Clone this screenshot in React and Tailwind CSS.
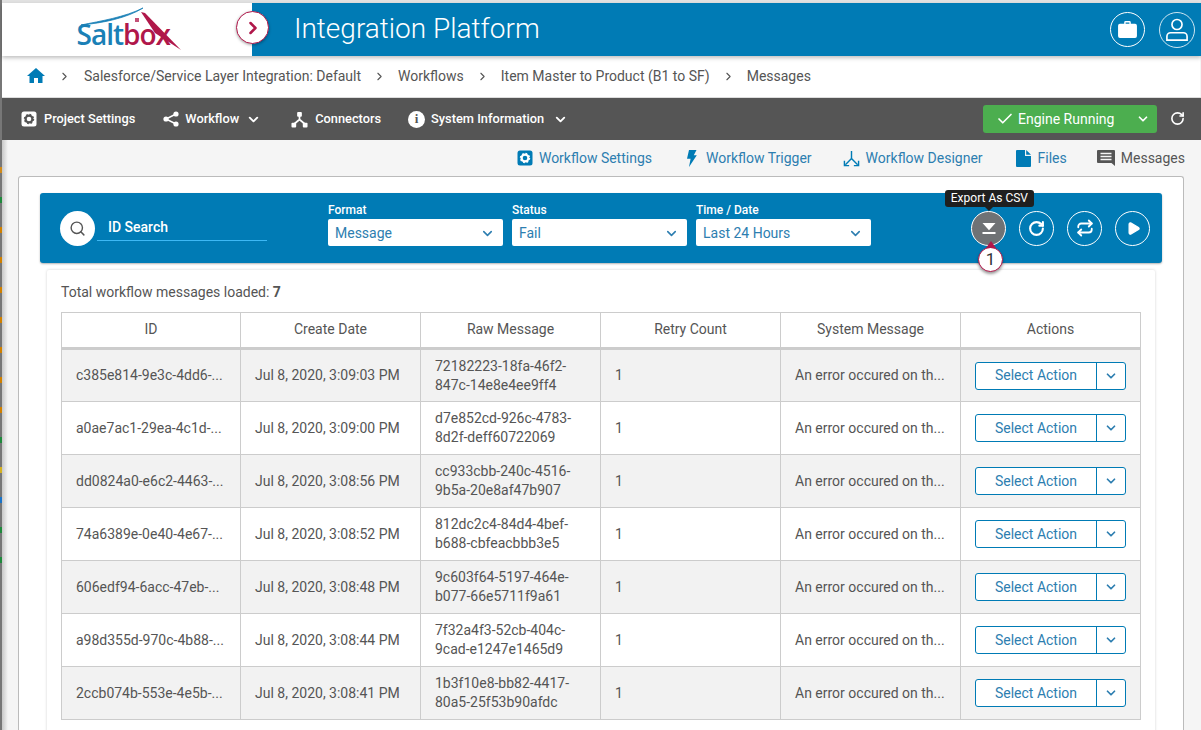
import React from "react";
import { ChevronRight, ChevronDown, RotateCw, Repeat, Search, Check, Play } from "lucide-react";

const rows = [
  ["c385e814-9e3c-4dd6-...", "Jul 8, 2020, 3:09:03 PM", "72182223-18fa-46f2-", "847c-14e8e4ee9ff4"],
  ["a0ae7ac1-29ea-4c1d-...", "Jul 8, 2020, 3:09:00 PM", "d7e852cd-926c-4783-", "8d2f-deff60722069"],
  ["dd0824a0-e6c2-4463-...", "Jul 8, 2020, 3:08:56 PM", "cc933cbb-240c-4516-", "9b5a-20e8af47b907"],
  ["74a6389e-0e40-4e67-...", "Jul 8, 2020, 3:08:52 PM", "812dc2c4-84d4-4bef-", "b688-cbfeacbbb3e5"],
  ["606edf94-6acc-47eb-...", "Jul 8, 2020, 3:08:48 PM", "9c603f64-5197-464e-", "b077-66e5711f9a61"],
  ["a98d355d-970c-4b88-...", "Jul 8, 2020, 3:08:44 PM", "7f32a4f3-52cb-404c-", "9cad-e1247e1465d9"],
  ["2ccb074b-553e-4e5b-...", "Jul 8, 2020, 3:08:41 PM", "1b3f10e8-bb82-4417-", "80a5-25f53b90afdc"],
];
const heads = ["ID", "Create Date", "Raw Message", "Retry Count", "System Message", "Actions"];
const ticks = [
  [170, "#d08a1a"], [200, "#1f8a3c"], [230, "#d08000"], [260, "#d08000"], [290, "#d08000"], [320, "#d08000"],
  [350, "#d08000"], [380, "#d08000"], [410, "#d08000"], [440, "#1f8a3c"], [470, "#d4b020"], [500, "#1a73c8"],
  [530, "#1f8a3c"], [560, "#1f8a3c"],
];

function GearBox({ className }) {
  return (
    <svg viewBox="0 0 16 16" className={className}>
      <rect x="0.5" y="0.5" width="15" height="15" rx="2.5" fill="currentColor" />
      <circle cx="8" cy="8" r="3.4" fill="none" stroke="var(--gear)" strokeWidth="2.2" />
      <circle cx="8" cy="8" r="4.4" fill="none" stroke="var(--gear)" strokeWidth="1.6" strokeDasharray="1.7 1.75" />
    </svg>
  );
}
function Tree({ className }) {
  return (
    <svg viewBox="0 0 18 18" className={className} fill="currentColor">
      <rect x="6.5" y="1" width="5" height="5" rx="1" />
      <rect x="0.5" y="12.5" width="5" height="5" rx="1" />
      <rect x="12.5" y="12.5" width="5" height="5" rx="1" />
      <path d="M9 5v4M9 9l-6 5M9 9l6 5" stroke="currentColor" strokeWidth="1.8" fill="none" />
    </svg>
  );
}
function Share({ className }) {
  return (
    <svg viewBox="0 0 16 16" className={className} fill="currentColor">
      <circle cx="13" cy="3" r="2.6" />
      <circle cx="3" cy="8" r="2.6" />
      <circle cx="13" cy="13" r="2.6" />
      <path d="M13 3 3 8l10 5" fill="none" stroke="currentColor" strokeWidth="1.5" />
    </svg>
  );
}
function Designer({ className }) {
  return (
    <svg viewBox="0 0 18 18" className={className} fill="none" stroke="currentColor" strokeWidth="1.5">
      <path d="M9 1v8M9 9l-6.5 6.5M9 9l6.5 6.5" />
      <path d="M1.5 11.5v5h5M16.5 11.5v5h-5" />
    </svg>
  );
}
function HomeIcon({ className }) {
  return (
    <svg viewBox="0 0 18 15" className={className} fill="currentColor">
      <path d="M9 0 18 8h-2.5v7h-4.5v-5H7v5H2.500V8H0Z" />
    </svg>
  );
}
function Bolt({ className }) {
  return (
    <svg viewBox="0 0 11 17" className={className} fill="currentColor">
      <path d="M3 0h7.500L7.800 5.200h3L3 17l1.600-8.300H1Z" />
    </svg>
  );
}
function FileIcon({ className }) {
  return (
    <svg viewBox="0 0 15 17" className={className} fill="currentColor">
      <path d="M1 0h8v6h6v10a1 1 0 0 1-1 1H1a1 1 0 0 1-1-1V1a1 1 0 0 1 1-1Z" />
      <path d="M10.200 0 15 4.800h-4.800Z" />
    </svg>
  );
}
function MsgIcon({ className }) {
  return (
    <svg viewBox="0 0 18 17" className={className}>
      <path d="M0 1a1 1 0 0 1 1-1h16a1 1 0 0 1 1 1v15l-3.500-3H1a1 1 0 0 1-1-1Z" fill="#555" />
      <path d="M3.500 3.500h11M3.500 6.500h11M3.500 9.500h11" stroke="#f5f5f5" strokeWidth="1.700" />
    </svg>
  );
}
function Logo() {
  return (
    <div className="relative w-[110px] h-[46px]">
      <svg viewBox="0 0 110 46" className="absolute inset-0 w-full h-full">
        <path d="M6 18 C26 14 50 10 68 1 C52 11 28 16 6 18Z" fill="#1a80b6" stroke="#1a80b6" strokeWidth="0.8" />
        <path d="M66 5 L70 6 L106 43 L80 26Z" fill="#b0174a" />
        <rect x="60" y="11" width="4" height="4" fill="#b0174a" opacity="0.75" />
      </svg>
      <span className="absolute left-[2px] top-[11px] text-[28px] leading-[32px] font-semibold font-['Open_Sans',sans-serif] tracking-[-1px] text-[#1a80b6]">
        Salt<span className="text-[#b0174a]">box</span>
      </span>
    </div>
  );
}

export default function App() {
  return (
    <div className="relative w-[1201px] h-[730px] overflow-hidden bg-[#f5f5f5] font-['Roboto',sans-serif] text-[#555]">
      {ticks.map(([y, c]) => (
        <span key={y} className="absolute left-0 w-[1.5px] h-[6px] z-30" style={{ top: y - 3, background: c }} />
      ))}
      <div className="absolute left-[2px] top-[140px] bottom-0 w-[6px] bg-gradient-to-r from-[#c8c8c8] to-[#f5f5f5]" />
      <div className="flex h-full">
        <div className="w-[2px] shrink-0 bg-[#777]" />
        <div className="flex-1 min-w-0 flex flex-col">
          <div className="h-[3px] bg-[#e2e2e2]" />
          {/* Header */}
          <header className="relative z-20 h-[53px] flex bg-[#007bb5] shadow-[0_2px_4px_rgba(0,0,0,0.25)]">
            <div className="w-[250px] bg-white flex justify-center pl-[5px] pt-[4px]">
              <Logo />
            </div>
            <div className="flex-1 flex items-center pl-[42px] pr-[6px] gap-[14px]">
              <span className="flex-1 text-white text-[28px] font-light -mt-[2px]">Integration Platform</span>
              <span className="w-[35px] h-[35px] rounded-full border border-white flex items-center justify-center">
                <svg viewBox="0 0 20 18" className="w-[19px] h-[17px]" fill="white">
                  <path d="M6.500 3V1.500A1.500 1.500 0 0 1 8 0h4a1.500 1.500 0 0 1 1.500 1.500V3H18a2 2 0 0 1 2 2v11a2 2 0 0 1-2 2H2a2 2 0 0 1-2-2V5a2 2 0 0 1 2-2Zm1.500 0h4V1.500H8Z" />
                </svg>
              </span>
              <span className="w-[36px] h-[36px] rounded-full border border-white/80 flex items-center justify-center">
                <svg viewBox="0 0 24 26" className="w-[22px] h-[24px]" fill="none" stroke="white" strokeWidth="1.8">
                  <circle cx="12" cy="7" r="5.5" />
                  <path d="M5 16h14a4 4 0 0 1 4 4v4H1v-4a4 4 0 0 1 4-4Z" />
                </svg>
              </span>
            </div>
            <span className="absolute left-[234px] top-[8px] w-[33px] h-[33px] rounded-full bg-white border border-[#b0174a] flex items-center justify-center shadow-[0_1px_3px_rgba(0,0,0,0.35)]">
              <ChevronRight className="w-[20px] h-[20px] text-[#b0174a]" strokeWidth={3} />
            </span>
          </header>
          {/* Breadcrumb */}
          <nav className="h-[41px] bg-white flex items-center pl-[25px] text-[14px] text-[#555] mr-[1px]">
            <HomeIcon className="w-[18px] h-[15px] text-[#007bb5] -mt-[3px]" />
            <ChevronRight className="ml-[13px] mr-[13px] w-[13px] h-[13px]" strokeWidth={2} />
            <span>Salesforce/Service Layer Integration: Default</span>
            <ChevronRight className="mx-[12px] w-[13px] h-[13px]" strokeWidth={2} />
            <span>Workflows</span>
            <ChevronRight className="mx-[12px] w-[13px] h-[13px]" strokeWidth={2} />
            <span>Item Master to Product (B1 to SF)</span>
            <ChevronRight className="mx-[12px] w-[13px] h-[13px]" strokeWidth={2} />
            <span>Messages</span>
          </nav>
          {/* Nav */}
          <div className="h-[43px] bg-[#555] border-t border-[#ddd] flex items-center text-white text-[12.8px] font-medium pl-[19px]">
            <span className="flex items-center gap-[7px] [--gear:#555]">
              <GearBox className="w-[16px] h-[16px] text-white" />Project Settings
            </span>
            <span className="flex items-center ml-[28px]">
              <Share className="w-[16px] h-[16px] mr-[6px]" />Workflow
              <ChevronDown className="w-[15px] h-[15px] ml-[7px]" strokeWidth={3} />
            </span>
            <span className="flex items-center gap-[7px] ml-[30px]">
              <Tree className="w-[17px] h-[17px]" />Connectors
            </span>
            <span className="flex items-center ml-[27px]">
              <span className="w-[17px] h-[17px] mr-[6px] rounded-full bg-white text-[#555] font-['Liberation_Serif',serif] font-bold text-[13px] flex items-center justify-center">i</span>
              System Information
              <ChevronDown className="w-[15px] h-[15px] ml-[9px]" strokeWidth={3} />
            </span>
            <span className="ml-auto w-[174px] h-[28px] rounded-[3px] bg-[#4cae4f] flex items-center pl-[13px] pr-[7px] text-[14px] font-normal">
              <Check className="w-[18px] h-[18px] mr-[4px]" strokeWidth={2.2} />
              <span className="flex-1">Engine Running</span>
              <ChevronDown className="w-[14px] h-[14px]" strokeWidth={3} />
            </span>
            <RotateCw className="w-[15px] h-[15px] ml-[13px] mr-[16px] -mt-[2px]" strokeWidth={2.6} />
          </div>
          {/* Sub nav */}
          <div className="h-[36px] flex items-center justify-end text-[14px] pr-[16px] text-[#2d7eb0] [--gear:white]">
            <span className="flex items-center gap-[6px]"><GearBox className="w-[16px] h-[16px] text-[#007bb5]" />Workflow Settings</span>
            <span className="flex items-center gap-[9px] ml-[34px]"><Bolt className="w-[11px] h-[17px] text-[#007bb5]" />Workflow Trigger</span>
            <span className="flex items-center gap-[6px] ml-[31px]"><Designer className="w-[17px] h-[17px] text-[#007bb5]" />Workflow Designer</span>
            <span className="flex items-center gap-[7px] ml-[33px]"><FileIcon className="w-[15px] h-[17px] text-[#007bb5]" />Files</span>
            <span className="flex items-center gap-[6px] ml-[30px] text-[#555]"><MsgIcon className="w-[18px] h-[17px]" />Messages</span>
          </div>
          {/* Main panel */}
          <main className="ml-[16px] mr-[17px] flex-1 min-h-0 bg-white border-l border-r border-t border-[#bbb] rounded-tl-[3px] rounded-tr-[3px] px-[21px] pt-[16px]">
            <div className="relative z-10 h-[70px] rounded-[3px] bg-[#007bb5] flex items-center pl-[20px] pr-[12px] text-white shadow-[0_1px_2px_rgba(0,0,0,0.3)]">
              <span className="w-[35px] h-[35px] rounded-full bg-white flex items-center justify-center text-[#555]">
                <Search className="w-[17px] h-[17px]" strokeWidth={2} />
              </span>
              <div className="ml-[2px] w-[170px] h-[27px] mb-[1px] border-b border-[#3db8f5] pl-[11px] text-[14px] font-medium leading-[26px]">ID Search</div>
              <div className="ml-[61px] w-[175px] mb-[7px]">
                <div className="text-[12px] leading-[14px] mb-[2px] font-medium">Format</div>
                <div className="h-[27px] bg-white rounded-[2px] flex items-center justify-between pl-[7px] pr-[8px] pt-[1px] text-[#2d7eb0] text-[14px]">Message<ChevronDown className="w-[15px] h-[15px]" strokeWidth={2.5} /></div>
              </div>
              <div className="ml-[9px] w-[175px] mb-[7px]">
                <div className="text-[12px] leading-[14px] mb-[2px] font-medium">Status</div>
                <div className="h-[27px] bg-white rounded-[2px] flex items-center justify-between pl-[7px] pr-[8px] pt-[1px] text-[#2d7eb0] text-[14px]">Fail<ChevronDown className="w-[15px] h-[15px]" strokeWidth={2.5} /></div>
              </div>
              <div className="ml-[9px] w-[175px] mb-[7px]">
                <div className="text-[12px] leading-[14px] mb-[2px] font-medium">Time / Date</div>
                <div className="h-[27px] bg-white rounded-[2px] flex items-center justify-between pl-[7px] pr-[8px] pt-[1px] text-[#2d7eb0] text-[14px]">Last 24 Hours<ChevronDown className="w-[15px] h-[15px]" strokeWidth={2.5} /></div>
              </div>
              <div className="ml-auto flex gap-[13px]">
                <span className="w-[35px] h-[35px] rounded-full bg-[#6f7275] border border-white flex flex-col items-center justify-center">
                  <svg viewBox="0 0 14 11" className="w-[14px] h-[11px]" fill="white"><path d="M0.500 0h13L7 7.300Z" /><rect x="0.500" y="9" width="13" height="2" /></svg>
                </span>
                <span className="w-[35px] h-[35px] rounded-full border border-white flex items-center justify-center"><RotateCw className="w-[17px] h-[17px]" strokeWidth={3} /></span>
                <span className="w-[35px] h-[35px] rounded-full border border-white flex items-center justify-center"><Repeat className="w-[18px] h-[18px]" strokeWidth={2.4} /></span>
                <span className="w-[35px] h-[35px] rounded-full border border-white flex items-center justify-center"><Play className="w-[15px] h-[15px] fill-white ml-[2px]" /></span>
              </div>
              {/* Tooltip */}
              <div className="absolute right-[128px] top-[-3px] h-[17px] px-[6px] rounded-[3px] bg-[#1f1f1f] text-white text-[12px] leading-[17px] whitespace-nowrap">
                Export As CSV
                <span className="absolute left-1/2 -translate-x-1/2 top-full border-x-[4px] border-x-transparent border-t-[4px] border-t-[#1f1f1f]" />
              </div>
              {/* Callout */}
              <div className="absolute right-[159px] top-[54px] w-[25px] h-[25px] rounded-full bg-white border border-[#b0174a] flex items-center justify-center text-[#333] text-[17px] shadow-[0_2px_3px_rgba(0,0,0,0.4)]">
                1
                <span className="absolute left-1/2 -translate-x-1/2 -top-[7px] border-x-[5px] border-x-transparent border-b-[7px] border-b-[#b0174a]" />
              </div>
            </div>
            <div className="mt-[7px] mx-[7px] h-[500px] bg-white rounded-[2px] shadow-[0_0_3px_rgba(0,0,0,0.18)] px-[14px] pt-[14px]">
              <div className="text-[14px] leading-[16px]">Total workflow messages loaded: <b className="font-bold">7</b></div>
              <table className="mt-[12px] w-[1079px] table-fixed border-collapse text-[14px]">
                <colgroup>
                  <col className="w-[179px]" />
                  <col className="w-[180px]" />
                  <col className="w-[180px]" />
                  <col className="w-[180px]" />
                  <col className="w-[180px]" />
                  <col className="w-[180px]" />
                </colgroup>
                <thead>
                  <tr className="h-[36px] bg-white border-b-[3px] border-[#ccc]">
                    {heads.map((h) => (
                      <th key={h} className="border border-[#ccc] border-b-[3px] font-normal text-center p-0 pb-[2px]">{h}</th>
                    ))}
                  </tr>
                </thead>
                <tbody>
                  {rows.map((r, i) => (
                    <tr key={r[0]} className={i % 2 === 0 ? "h-[53px] bg-[#f2f2f2]" : "h-[53px] bg-white"}>
                      <td className="border border-[#ccc] pl-[14px] p-0 whitespace-nowrap">{r[0]}</td>
                      <td className="border border-[#ccc] pl-[14px] p-0 whitespace-nowrap">{r[1]}</td>
                      <td className="border border-[#ccc] pl-[14px] p-0 leading-[19px]">{r[2]}<br />{r[3]}</td>
                      <td className="border border-[#ccc] pl-[14px] p-0">1</td>
                      <td className="border border-[#ccc] pl-[14px] p-0 whitespace-nowrap">An error occured on th...</td>
                      <td className="border border-[#ccc] p-0">
                        <div className="ml-[14px] w-[151px] h-[28px] flex bg-white border border-[#007bb5] rounded-[3px] text-[#2d7eb0]">
                          <span className="flex-1 flex items-center justify-center border-r border-[#007bb5]">Select Action</span>
                          <span className="w-[28px] flex items-center justify-center"><ChevronDown className="w-[14px] h-[14px]" strokeWidth={3} /></span>
                        </div>
                      </td>
                    </tr>
                  ))}
                </tbody>
              </table>
            </div>
          </main>
        </div>
      </div>
    </div>
  );
}
